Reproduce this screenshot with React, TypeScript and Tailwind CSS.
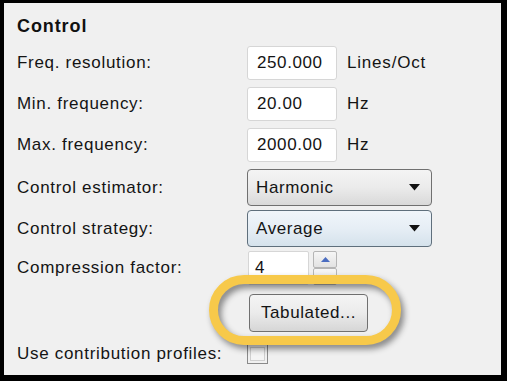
import React from "react";

const font = "font-['Liberation_Sans',Arial,sans-serif]";

function TextBox({ value, width = "w-[90px]" }: { value: string; width?: string }) {
    return (
        <div className={`${width} h-[34px] bg-white border border-[#d6d6d6] rounded-[3px] flex items-center pl-[9px] text-[17px] tracking-[0.6px] text-[#141414]`}>
            {value}
        </div>
    );
}

function Dropdown({ value, hot }: { value: string; hot?: boolean }) {
    return (
        <div
            className={`w-[185px] h-[37px] rounded-[4px] border flex items-center pl-[8px] pr-[11px] justify-between text-[17px] tracking-[0.6px] text-[#141414] ${hot
                ? "border-[#5f6f7c] bg-gradient-to-b from-[#f0f5fa] via-[#e6eef5] to-[#d5e2ec]"
                : "border-[#707070] bg-gradient-to-b from-[#f4f4f4] via-[#ebebeb] to-[#d9d9d9]"
                }`}
        >
            <span>{value}</span>
            <svg width="11" height="7" viewBox="0 0 11 7">
                <polygon points="0,0 11,0 5.5,6.5" fill="#111" />
            </svg>
        </div>
    );
}

function Row({ label, children, h, mt }: { label: string; children?: React.ReactNode; h: string; mt: string }) {
    return (
        <div className={`flex items-center ${h} ${mt}`}>
            <div className="w-[230px] text-[17px] tracking-[0.7px] text-[#141414]">{label}</div>
            {children}
        </div>
    );
}

export default function App() {
    return (
        <div className={`w-[507px] h-[381px] bg-black pt-[3px] pl-[4px] pr-[6px] pb-[6px] ${font}`}>
            <div className="relative w-full h-full bg-[#f0f0f0] pl-[13px] flex flex-col overflow-hidden">
                <div className="h-[43px] pt-[3px] flex items-center text-[18px] font-bold tracking-[0.9px] text-[#111]">Control</div>

                <Row label="Freq. resolution:" h="h-[34px]" mt="mt-0">
                    <TextBox value="250.000" />
                    <span className="ml-[10px] text-[17px] tracking-[0.8px] text-[#141414]">Lines/Oct</span>
                </Row>
                <Row label="Min. frequency:" h="h-[34px]" mt="mt-[7px]">
                    <TextBox value="20.00" />
                    <span className="ml-[10px] text-[17px] tracking-[0.8px] text-[#141414]">Hz</span>
                </Row>
                <Row label="Max. frequency:" h="h-[34px]" mt="mt-[7px]">
                    <TextBox value="2000.00" />
                    <span className="ml-[10px] text-[17px] tracking-[0.8px] text-[#141414]">Hz</span>
                </Row>
                <Row label="Control estimator:" h="h-[37px]" mt="mt-[7px]">
                    <Dropdown value="Harmonic" />
                </Row>
                <Row label="Control strategy:" h="h-[37px]" mt="mt-[4px]">
                    <Dropdown value="Average" hot />
                </Row>
                <Row label="Compression factor:" h="h-[34px]" mt="mt-[4px]">
                    <div className="ml-[1px] w-[61px] h-[34px] bg-white border border-[#d6d6d6] rounded-[2px] flex items-center pl-[6px] text-[17px] text-[#141414]">
                        4
                    </div>
                    <div className="ml-[4px] w-[24px] h-[34px] flex flex-col">
                        <div className="h-[17px] border border-[#b5b5b5] rounded-[2px] bg-gradient-to-b from-[#f6f6f6] to-[#e2e2e2] flex items-center justify-center">
                            <svg width="9" height="5" viewBox="0 0 9 5">
                                <polygon points="0,5 9,5 4.5,0" fill="#4a6cc0" />
                            </svg>
                        </div>
                        <div className="h-[17px] border border-[#b5b5b5] rounded-[2px] bg-gradient-to-b from-[#f6f6f6] to-[#e2e2e2]" />
                    </div>
                </Row>
                <div className="flex mt-[9px] h-[38px]">
                    <div className="w-[232px]" />
                    <div className="w-[119px] h-[38px] rounded-[4px] border border-[#707070] bg-gradient-to-b from-[#f4f4f4] via-[#ebebeb] to-[#d6d6d6] flex items-center justify-center text-[17px] tracking-[0.6px] text-[#141414]">
                        Tabulated...
                    </div>
                </div>
                <Row label="Use contribution profiles:" h="h-[20px]" mt="mt-[12px]">
                    <div className="w-[21px] h-[20px] border border-[#8a8a8a] p-[2px]">
                        <div className="w-full h-full border border-[#cfcfcf] bg-[#f4f4f4]" />
                    </div>
                </Row>

                <div className="absolute left-[205px] top-[272px] w-[192px] h-[70px] rounded-full border-[9px] border-[#f7c94a] [filter:drop-shadow(3px_4px_3px_rgba(0,0,0,0.45))]" />
            </div>
        </div>
    );
}
